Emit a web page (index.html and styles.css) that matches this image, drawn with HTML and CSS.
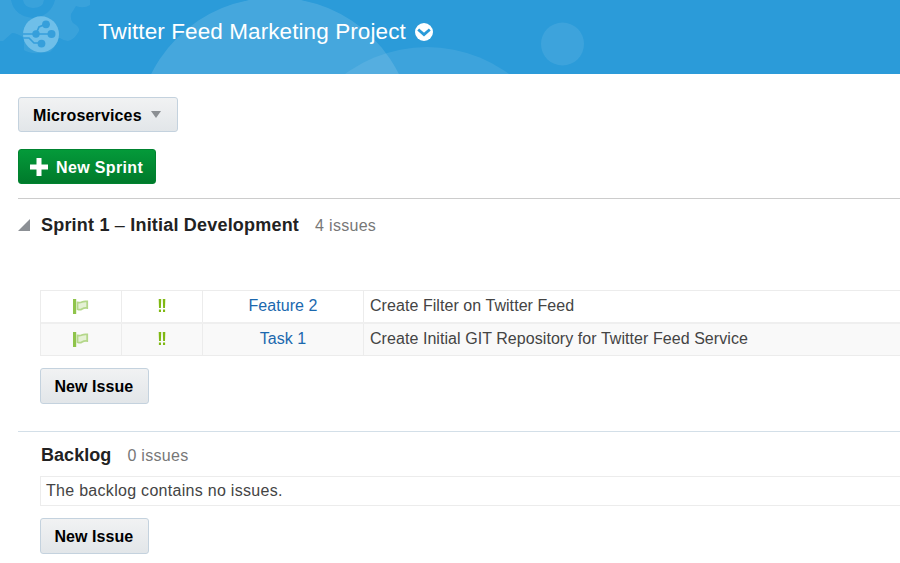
FILE: index.html
```html
<!DOCTYPE html>
<html lang="en">
<head>
<meta charset="utf-8">
<title>Twitter Feed Marketing Project</title>
<link rel="stylesheet" href="styles.css">
</head>
<body>
<header class="banner">
  <svg class="banner-art" width="900" height="74" viewBox="0 0 900 74" aria-hidden="true">
    <path class="gear" fill-rule="evenodd" d="M0 0H90V5Q84 9 76 6L71 14Q70 19 73 23Q80 27 79 31Q74 40 68 41Q64 41 60 38L57 38Q57 46 50 52Q30 55 24 50V38Q17 33 12 33L3 41L0 41ZM11 0Q14 16 33 18Q51 16 55 0H44Q43 8 33 8Q24 7 23 0Z"/>
    <circle class="orb" cx="275" cy="136" r="138.5"/>
    <circle class="orb soft" cx="427" cy="185" r="138"/>
    <circle class="orb soft" cx="562.5" cy="44" r="21.5"/>
  </svg>
  <svg class="logo" width="36" height="37" viewBox="0 0 36 37" aria-hidden="true">
    <circle class="disc" cx="18" cy="18.3" r="18"/>
    <g class="links"><path d="M0 18H28M13 18L16 11L23 8M0 22H6L11 27H18"/></g>
    <g class="dots"><circle cx="23" cy="8.3" r="3.9"/><circle cx="13" cy="18" r="3.7"/><circle cx="28.5" cy="18" r="4"/><circle cx="18.5" cy="27.6" r="3.9"/></g>
  </svg>
  <h1>Twitter Feed Marketing Project</h1>
  <svg class="menu" width="18" height="18" viewBox="0 0 18 18" aria-hidden="true"><circle cx="9" cy="9" r="9"/><path d="M3.2 6.5L9 11.6L14.8 6.5"/></svg>
</header>
<main>
  <div class="toolbar">
    <button class="btn select">Microservices<svg width="10" height="7" viewBox="0 0 10 7"><path d="M0 0H10L5 7Z"/></svg></button>
    <button class="btn primary"><svg width="18" height="18" viewBox="0 0 18 18"><path d="M6.5 0H11.5V6.5H18V11.5H11.5V18H6.5V11.5H0V6.5H6.5Z"/></svg><span>New Sprint</span></button>
  </div>
  <section class="sprint">
    <div class="heading"><svg class="toggle" width="12" height="12" viewBox="0 0 12 12"><path d="M12 0V12H0Z"/></svg><h2>Sprint 1 <span class="dash">–</span> Initial Development</h2><span class="count">4 issues</span></div>
    <div class="issues">
      <div class="row">
        <div class="cell"><svg class="flag" width="16" height="17" viewBox="0 0 16 17"><path class="pole" d="M0 1H3.2V16H0Z"/><path class="cloth" d="M4.5 4.5Q7 5 9 4T14.2 3.4V10Q11 9.7 9 11T4.5 11.2Z"/></svg></div>
        <div class="cell"><svg class="prio" width="8" height="14" viewBox="0 0 8 14"><path d="M.7 0H3.2L2.9 9H1ZM4.8 0H7.3L7 9H5.1ZM.9 10.5H3V13H.9ZM5 10.5H7.1V13H5Z"/></svg></div>
        <div class="cell link"><a>Feature 2</a></div>
        <div class="cell summary"><span>Create Filter on Twitter Feed</span></div>
      </div>
      <div class="row alt">
        <div class="cell"><svg class="flag" width="16" height="17" viewBox="0 0 16 17"><path class="pole" d="M0 1H3.2V16H0Z"/><path class="cloth" d="M4.5 4.5Q7 5 9 4T14.2 3.4V10Q11 9.7 9 11T4.5 11.2Z"/></svg></div>
        <div class="cell"><svg class="prio" width="8" height="14" viewBox="0 0 8 14"><path d="M.7 0H3.2L2.9 9H1ZM4.8 0H7.3L7 9H5.1ZM.9 10.5H3V13H.9ZM5 10.5H7.1V13H5Z"/></svg></div>
        <div class="cell link"><a>Task 1</a></div>
        <div class="cell summary"><span>Create Initial GIT Repository for Twitter Feed Service</span></div>
      </div>
    </div>
    <button class="btn issue">New Issue</button>
  </section>
  <section class="backlog">
    <div class="heading"><h2>Backlog</h2><span class="count">0 issues</span></div>
    <div class="empty">The backlog contains no issues.</div>
    <button class="btn issue">New Issue</button>
  </section>
</main>
</body>
</html>
```
FILE: styles.css
```css
* { box-sizing: border-box; }
body { margin: 0; height: 563px; overflow: hidden; background: #fff; color: #444; font: 16px/20px "Liberation Sans", Arial, sans-serif; letter-spacing: .06px; }
h1, h2 { margin: 0; }
svg { display: block; flex: none; }
.banner { position: relative; display: flex; height: 74px; padding-left: 23px; background: #2b9bd9; overflow: hidden; }
.banner-art { position: absolute; left: 0; top: 0; }
.gear { fill: #fff; opacity: .07; }
.orb { fill: #fff; opacity: .125; }
.orb.soft { opacity: .085; }
.logo { position: relative; margin-top: 15.5px; }
.disc { fill: #6fbfe9; }
.links { fill: none; stroke: #369fdb; stroke-width: 1.7; }
.dots { fill: #369fdb; }
h1 { position: relative; margin: 18px 0 0 39px; width: 316.5px; color: #fff; font-size: 22.5px; line-height: 28px; font-weight: 400; letter-spacing: .09px; white-space: nowrap; }
.menu { position: relative; margin-top: 23px; fill: #fff; }
.menu path { fill: none; stroke: #2b9bd9; stroke-width: 2.8; }
main { padding-left: 18px; }
.toolbar { display: flex; flex-direction: column; align-items: flex-start; gap: 17px; padding-top: 23px; height: 124px; }
.btn { display: flex; align-items: center; height: 35px; padding: 2px 14px 0; border: 1px solid #c4d2de; border-radius: 3px; background: linear-gradient(#f1f2f3, #e2e6e9); color: #000; font: bold 16px/20px "Liberation Sans", Arial, sans-serif; letter-spacing: .05px; white-space: nowrap; }
.select { width: 160px; justify-content: space-between; padding-right: 16px; letter-spacing: .15px; }
.select svg { fill: #8b8f93; margin-top: -2px; }
.primary { width: 138px; padding: 2px 0 0 11px; border-color: #008330; background: linear-gradient(#049a3a, #007a2b); color: #fff; letter-spacing: .35px; }
.primary svg { fill: #fff; margin: -2px 8px 0 0; }
.sprint { border-top: 1px solid #ccc; height: 233px; padding: 15px 0 0 22px; }
.heading { display: flex; align-items: baseline; position: relative; height: 22px; padding-left: 1px; }
.toggle { position: absolute; left: -22px; top: 5px; fill: #8c9095; }
h2 { color: #222; font-size: 18px; line-height: 22px; letter-spacing: .2px; white-space: nowrap; }
.backlog h2 { letter-spacing: .05px; }
.dash { font-weight: 400; }
.count { color: #777; margin-left: 16px; letter-spacing: .3px; }
.issues { margin-top: 54px; border: 1px solid #ececec; border-right: 0; height: 66px; }
.row { display: grid; grid-template-columns: 81px 81px 161px 1fr; height: 31px; }
.row.alt { height: 33px; background: #f9f9f9; border-top: 2px solid #efefef; }
.cell { display: flex; align-items: center; justify-content: center; border-right: 1px solid #ececec; white-space: nowrap; padding-bottom: 1px; }
.flag { margin-left: 0; filter: blur(.3px); }
.pole { fill: #8fc44b; }
.cloth { fill: #e5f1d5; stroke: #b4d78a; stroke-width: 1.8; }
.prio { fill: #80b914; }
.link { color: #1b68ae; }
.summary { justify-content: flex-start; padding-left: 6px; border-right: 0; }
.issue { width: 109px; height: 36px; margin-top: 12px; padding: 1px 0 0 13.5px; }
.backlog { border-top: 1px solid #d3dfe8; padding: 12px 0 0 22px; }
.empty { margin-top: 10px; height: 30px; padding: 4px 5px; border: 1px solid #ececec; border-right: 0; letter-spacing: .29px; }
```
